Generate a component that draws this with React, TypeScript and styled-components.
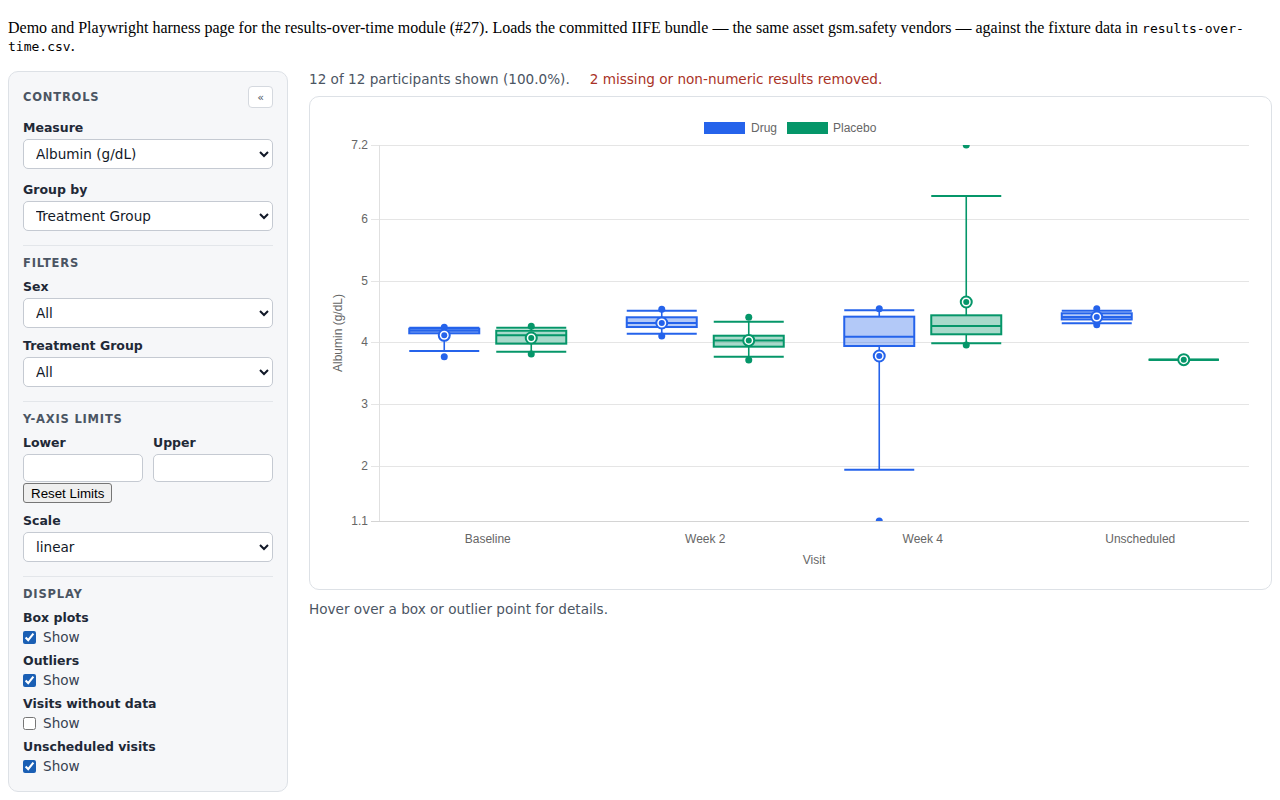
import React from "react";
import styled, { createGlobalStyle } from "styled-components";

const GlobalStyle = createGlobalStyle`
  body {
    margin: 8px;
    background: #ffffff;
    color: #000000;
    font-family: "Liberation Serif", serif;
    font-size: 16px;
  }
`;

const Intro = styled.p`
  margin: 11px 0 16px;
  line-height: normal;
`;

const Code = styled.code`
  font-family: "DejaVu Sans Mono", monospace;
  font-size: 13px;
`;

const Layout = styled.div`
  display: flex;
  align-items: flex-start;
  gap: 21px;
  font-family: "DejaVu Sans", sans-serif;
`;

/* ---------- controls panel ---------- */

const Sidebar = styled.aside`
  box-sizing: border-box;
  flex: 0 0 280px;
  width: 280px;
  padding: 14px 14px 17px;
  background: #f6f7f9;
  border: 1px solid #dde1e6;
  border-radius: 10px;
`;

const SectionTitle = styled.h2`
  margin: 0 0 8px;
  font-size: 11.5px;
  line-height: 15px;
  font-weight: 700;
  letter-spacing: 0.07em;
  text-transform: uppercase;
  color: #4b5563;
`;

const PanelHeader = styled.div`
  display: flex;
  align-items: center;
  justify-content: space-between;
  height: 22px;
  margin-bottom: 12px;

  ${SectionTitle} {
    margin: 0;
  }
`;

const CollapseButton = styled.button`
  width: 25px;
  height: 22px;
  padding: 0;
  border: 1px solid #d5d9df;
  border-radius: 4px;
  background: #ffffff;
  color: #4b5563;
  font-family: "DejaVu Sans", sans-serif;
  font-size: 11px;
  line-height: 1;
`;

const Section = styled.section`
  & + & {
    margin-top: 14px;
    padding-top: 10px;
    border-top: 1px solid #e3e6ea;
  }
`;

const FieldStack = styled.div<{ $gap: number }>`
  display: flex;
  flex-direction: column;
  gap: ${(props) => props.$gap}px;
`;

const Field = styled.div`
  display: flex;
  flex-direction: column;
  gap: 3px;
`;

const Label = styled.label`
  font-size: 12.5px;
  line-height: 16px;
  font-weight: 700;
  color: #1f2937;
`;

const Select = styled.select`
  box-sizing: border-box;
  width: 100%;
  height: 30px;
  padding: 0 8px;
  border: 1px solid #c5cad2;
  border-radius: 5px;
  background: #ffffff;
  color: #111827;
  font-family: "DejaVu Sans", sans-serif;
  font-size: 13.6px;
`;

const LimitBlock = styled.div`
  display: flex;
  flex-direction: column;
  align-items: flex-start;
  gap: 1px;
`;

const LimitGrid = styled.div`
  display: grid;
  grid-template-columns: 1fr 1fr;
  column-gap: 10px;
  row-gap: 3px;
  width: 100%;
`;

const NumberInput = styled.input`
  box-sizing: border-box;
  width: 100%;
  height: 28px;
  padding: 0 8px;
  border: 1px solid #c5cad2;
  border-radius: 5px;
  background: #ffffff;
  font-family: "DejaVu Sans", sans-serif;
  font-size: 13.6px;
`;

const ResetButton = styled.button`
  height: 20px;
  padding: 1px 7px;
  border: 1px solid #767676;
  border-radius: 3px;
  background: #efefef;
  color: #000000;
  font-family: "Liberation Sans", Arial, sans-serif;
  font-size: 13.333px;
`;

const CheckRow = styled.label`
  display: flex;
  align-items: center;
  gap: 7px;
  height: 16px;
  font-size: 13.6px;
  color: #374151;
`;

const Checkbox = styled.input`
  width: 13px;
  height: 13px;
  margin: 0;
  accent-color: #1a5fb4;
`;

/* ---------- chart column ---------- */

const Main = styled.main`
  flex: 1;
  min-width: 0;
`;

const StatusBar = styled.div`
  display: flex;
  gap: 20px;
  margin-bottom: 9px;
  font-size: 13.6px;
  line-height: 16px;
  color: #4b5563;
`;

const Warning = styled.span`
  color: #a93226;
`;

const ChartCard = styled.div`
  border: 1px solid #dde1e6;
  border-radius: 10px;
  background: #ffffff;
  overflow: hidden;

  svg {
    display: block;
  }
`;

const Hint = styled.p`
  margin: 11px 0 0;
  font-size: 13.6px;
  line-height: 17px;
  color: #4b5563;
`;

const ChartText = styled.text`
  font-family: "Liberation Sans", Arial, sans-serif;
  font-size: 12px;
  fill: #666666;
`;

/* ---------- chart data & scales ---------- */

type BoxStats = {
  min: number;
  q1: number;
  median: number;
  q3: number;
  max: number;
  mean: number;
  outliers: number[];
};

type Series = {
  name: string;
  color: string;
  fill: string;
  offset: number;
  stats: BoxStats[];
};

const visits = ["Baseline", "Week 2", "Week 4", "Unscheduled"];
const yTicks = [7.2, 6, 5, 4, 3, 2, 1.1];

const X_LEFT = 379;
const X_RIGHT = 1249;
const Y_TOP = 145;
const Y_BOTTOM = 521;
const V_MAX = 7.2;
const V_MIN = 1.1;
const BOX_WIDTH = 70;

const yOf = (v: number) =>
  Y_TOP + ((V_MAX - v) * (Y_BOTTOM - Y_TOP)) / (V_MAX - V_MIN);
const crisp = (px: number) => Math.round(px) + 0.5;
const catWidth = (X_RIGHT - X_LEFT) / visits.length;
const catCenter = (i: number) => X_LEFT + catWidth * (i + 0.5);

const series: Series[] = [
  {
    name: "Drug",
    color: "#2563eb",
    fill: "rgba(37, 99, 235, 0.35)",
    offset: -43.5,
    stats: [
      { min: 3.858, q1: 4.145, median: 4.187, q3: 4.22, max: 4.236, mean: 4.113, outliers: [3.765, 4.243] },
      { min: 4.139, q1: 4.247, median: 4.312, q3: 4.405, max: 4.512, mean: 4.312, outliers: [4.1, 4.535] },
      { min: 1.932, q1: 3.939, median: 4.09, q3: 4.415, max: 4.518, mean: 3.777, outliers: [1.1, 4.544] },
      { min: 4.31, q1: 4.37, median: 4.41, q3: 4.47, max: 4.51, mean: 4.41, outliers: [4.285, 4.544] },
    ],
  },
  {
    name: "Placebo",
    color: "#059669",
    fill: "rgba(5, 150, 105, 0.35)",
    offset: 43.5,
    stats: [
      { min: 3.847, q1: 3.977, median: 4.113, q3: 4.187, max: 4.236, mean: 4.069, outliers: [3.81, 4.259] },
      { min: 3.765, q1: 3.928, median: 4.03, q3: 4.106, max: 4.333, mean: 4.03, outliers: [3.712, 4.405] },
      { min: 3.983, q1: 4.129, median: 4.264, q3: 4.437, max: 6.373, mean: 4.653, outliers: [3.955, 7.2] },
      { min: 3.718, q1: 3.718, median: 3.718, q3: 3.718, max: 3.718, mean: 3.718, outliers: [] },
    ],
  },
];

interface BoxProps {
  cx: number;
  stats: BoxStats;
  color: string;
  fill: string;
}

const BoxPlot = ({ cx, stats, color, fill }: BoxProps) => {
  const left = cx - BOX_WIDTH / 2;
  const right = cx + BOX_WIDTH / 2;
  const top = yOf(stats.q3);
  const bottom = yOf(stats.q1);
  return (
    <g>
      <line x1={cx} x2={cx} y1={yOf(stats.max)} y2={top} stroke={color} strokeWidth={1.6} />
      <line x1={cx} x2={cx} y1={bottom} y2={yOf(stats.min)} stroke={color} strokeWidth={1.6} />
      <line x1={left} x2={right} y1={yOf(stats.max)} y2={yOf(stats.max)} stroke={color} strokeWidth={2} />
      <line x1={left} x2={right} y1={yOf(stats.min)} y2={yOf(stats.min)} stroke={color} strokeWidth={2} />
      <rect x={left} y={top} width={BOX_WIDTH} height={bottom - top} fill={fill} stroke={color} strokeWidth={2} />
      <line x1={left} x2={right} y1={yOf(stats.median)} y2={yOf(stats.median)} stroke={color} strokeWidth={2} />
      {stats.outliers.map((v) => (
        <circle key={v} cx={cx} cy={yOf(v)} r={3.5} fill={color} />
      ))}
      <circle cx={cx} cy={yOf(stats.mean)} r={5.5} fill="#ffffff" stroke={color} strokeWidth={2} />
      <circle cx={cx} cy={yOf(stats.mean)} r={3} fill={color} />
    </g>
  );
};

const ResultsChart = () => {
  const midX = (X_LEFT + X_RIGHT) / 2;
  const midY = (Y_TOP + Y_BOTTOM) / 2;
  return (
    <svg width={961} height={492} viewBox="310 97 961 492">
      <defs>
        <clipPath id="plot-area">
          <rect x={X_LEFT} y={Y_TOP} width={X_RIGHT - X_LEFT} height={Y_BOTTOM - Y_TOP} />
        </clipPath>
      </defs>

      {/* legend */}
      <rect x={704.5} y={122.5} width={40} height={11} fill="#2563eb" stroke="#2563eb" />
      <ChartText x={751} y={132}>Drug</ChartText>
      <rect x={787.5} y={122.5} width={40} height={11} fill="#059669" stroke="#059669" />
      <ChartText x={833} y={132}>Placebo</ChartText>

      {/* y grid, ticks and labels */}
      {yTicks.map((v) => (
        <g key={v}>
          <line
            x1={X_LEFT - 8}
            x2={X_RIGHT}
            y1={crisp(yOf(v))}
            y2={crisp(yOf(v))}
            stroke={v === V_MIN ? "#d4d4d4" : "#e5e5e5"}
          />
          <ChartText x={368} y={yOf(v) + 4} textAnchor="end">
            {v}
          </ChartText>
        </g>
      ))}
      <line x1={X_LEFT + 0.5} x2={X_LEFT + 0.5} y1={Y_TOP} y2={Y_BOTTOM} stroke="#e0e0e0" />

      {/* x labels */}
      {visits.map((visit, i) => (
        <ChartText key={visit} x={catCenter(i)} y={543} textAnchor="middle">
          {visit}
        </ChartText>
      ))}
      <ChartText x={midX} y={564} textAnchor="middle">
        Visit
      </ChartText>
      <ChartText
        x={0}
        y={0}
        textAnchor="middle"
        transform={`translate(341.5 ${midY}) rotate(-90)`}
      >
        Albumin (g/dL)
      </ChartText>

      <g clipPath="url(#plot-area)">
        {series.map((s) =>
          s.stats.map((stats, i) => (
            <BoxPlot
              key={`${s.name}-${i}`}
              cx={catCenter(i) + s.offset}
              stats={stats}
              color={s.color}
              fill={s.fill}
            />
          ))
        )}
      </g>
    </svg>
  );
};

interface ToggleProps {
  label: string;
  checked: boolean;
}

const DisplayToggle = ({ label, checked }: ToggleProps) => (
  <Field>
    <Label>{label}</Label>
    <CheckRow>
      <Checkbox type="checkbox" defaultChecked={checked} />
      Show
    </CheckRow>
  </Field>
);

export default function App() {
  return (
    <>
      <GlobalStyle />
      <Intro>
        Demo and Playwright harness page for the results-over-time module (#27). Loads the
        committed IIFE bundle — the same asset gsm.safety vendors — against the fixture data in{" "}
        <Code>results-over-time.csv</Code>.
      </Intro>

      <Layout>
        <Sidebar>
          <Section>
            <PanelHeader>
              <SectionTitle>Controls</SectionTitle>
              <CollapseButton type="button">«</CollapseButton>
            </PanelHeader>
            <FieldStack $gap={13}>
              <Field>
                <Label>Measure</Label>
                <Select defaultValue="alb">
                  <option value="alb">Albumin (g/dL)</option>
                </Select>
              </Field>
              <Field>
                <Label>Group by</Label>
                <Select defaultValue="trt">
                  <option value="trt">Treatment Group</option>
                </Select>
              </Field>
            </FieldStack>
          </Section>

          <Section>
            <SectionTitle>Filters</SectionTitle>
            <FieldStack $gap={10}>
              <Field>
                <Label>Sex</Label>
                <Select defaultValue="all">
                  <option value="all">All</option>
                </Select>
              </Field>
              <Field>
                <Label>Treatment Group</Label>
                <Select defaultValue="all">
                  <option value="all">All</option>
                </Select>
              </Field>
            </FieldStack>
          </Section>

          <Section>
            <SectionTitle>Y-axis limits</SectionTitle>
            <FieldStack $gap={10}>
              <LimitBlock>
                <LimitGrid>
                  <Label>Lower</Label>
                  <Label>Upper</Label>
                  <NumberInput type="number" />
                  <NumberInput type="number" />
                </LimitGrid>
                <ResetButton type="button">Reset Limits</ResetButton>
              </LimitBlock>
              <Field>
                <Label>Scale</Label>
                <Select defaultValue="linear">
                  <option value="linear">linear</option>
                  <option value="log">log</option>
                </Select>
              </Field>
            </FieldStack>
          </Section>

          <Section>
            <SectionTitle>Display</SectionTitle>
            <FieldStack $gap={8}>
              <DisplayToggle label="Box plots" checked />
              <DisplayToggle label="Outliers" checked />
              <DisplayToggle label="Visits without data" checked={false} />
              <DisplayToggle label="Unscheduled visits" checked />
            </FieldStack>
          </Section>
        </Sidebar>

        <Main>
          <StatusBar>
            <span>12 of 12 participants shown (100.0%).</span>
            <Warning>2 missing or non-numeric results removed.</Warning>
          </StatusBar>
          <ChartCard>
            <ResultsChart />
          </ChartCard>
          <Hint>Hover over a box or outlier point for details.</Hint>
        </Main>
      </Layout>
    </>
  );
}
